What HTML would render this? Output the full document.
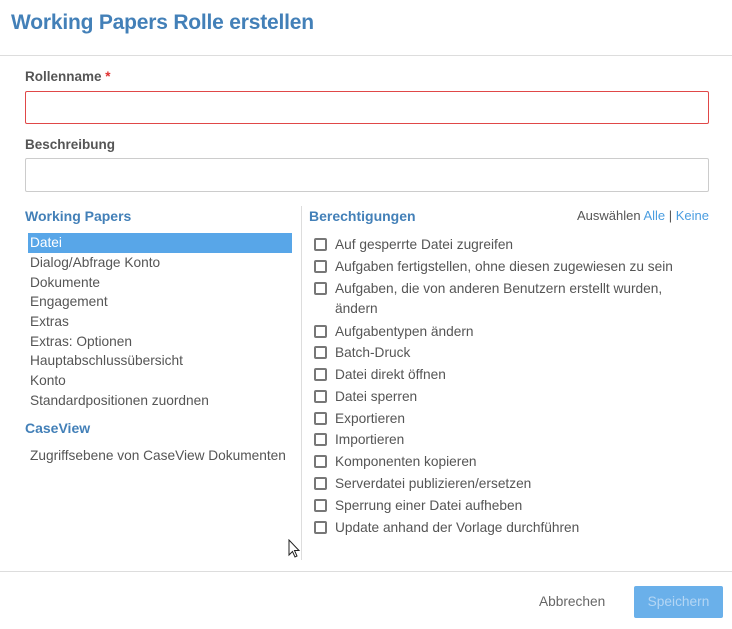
<!DOCTYPE html>
<html><head><meta charset="utf-8"><style>
*{margin:0;padding:0;box-sizing:border-box}
body{width:732px;height:629px;background:#fff;font-family:"Liberation Sans",sans-serif;color:#555;position:relative;overflow:hidden;font-size:13.7px}
.a{position:absolute;white-space:nowrap}
.t{left:11px;top:11px;font-size:21px;color:#4380b8;font-weight:bold;letter-spacing:-0.2px}
.hr{position:absolute;left:0;width:732px;height:1px;background:#ddd}
.lbl{font-weight:bold;font-size:13.5px;color:#555}
.in{position:absolute;left:25px;width:684px;border:1px solid #ccc;border-radius:2px}
.h{font-weight:bold;color:#4380b8;font-size:14px}
.li{position:absolute;left:28px;width:264px;height:20px;line-height:20px;padding-left:2px}
.cb{position:absolute;left:314px;width:13px;height:13px;border:2px solid #777;border-radius:2px}
.ct{position:absolute;left:335px}
</style></head><body>
<div class="a t">Working Papers Rolle erstellen</div>
<div class="hr" style="top:55px"></div>
<div class="a lbl" style="left:25px;top:69px">Rollenname <span style="color:#e03030">*</span></div>
<div class="in" style="top:91px;height:33px;border-color:#e04848"></div>
<div class="a lbl" style="left:25px;top:137px">Beschreibung</div>
<div class="in" style="top:158px;height:34px"></div>
<div class="a h" style="left:25px;top:208px">Working Papers</div>
<div style="position:absolute;left:301px;top:206px;width:1px;height:354px;background:#ddd"></div>
<div class="li" style="top:233px;background:#58a6e8;color:#fff">Datei</div>
<div class="li" style="top:253px">Dialog/Abfrage Konto</div>
<div class="li" style="top:273px">Dokumente</div>
<div class="li" style="top:292px">Engagement</div>
<div class="li" style="top:312px">Extras</div>
<div class="li" style="top:332px">Extras: Optionen</div>
<div class="li" style="top:351px">Hauptabschlussübersicht</div>
<div class="li" style="top:371px">Konto</div>
<div class="li" style="top:391px">Standardpositionen zuordnen</div>
<div class="a h" style="left:25px;top:420px">CaseView</div>
<div class="li" style="top:446px">Zugriffsebene von CaseView Dokumenten</div>
<div class="a h" style="left:309px;top:208px">Berechtigungen</div>
<div class="a" style="right:23px;top:208px;font-size:13px">Auswählen <span style="color:#4a9de0">Alle</span> | <span style="color:#4a9de0">Keine</span></div>
<div class="cb" style="top:238px"></div><div class="ct" style="top:237px">Auf gesperrte Datei zugreifen</div>
<div class="cb" style="top:260px"></div><div class="ct" style="top:259px">Aufgaben fertigstellen, ohne diesen zugewiesen zu sein</div>
<div class="cb" style="top:282px"></div><div class="ct" style="top:279px;line-height:20px;white-space:normal;width:360px">Aufgaben, die von anderen Benutzern erstellt wurden, ändern</div>
<div class="cb" style="top:325px"></div><div class="ct" style="top:324px">Aufgabentypen ändern</div>
<div class="cb" style="top:346px"></div><div class="ct" style="top:345px">Batch-Druck</div>
<div class="cb" style="top:368px"></div><div class="ct" style="top:367px">Datei direkt öffnen</div>
<div class="cb" style="top:390px"></div><div class="ct" style="top:389px">Datei sperren</div>
<div class="cb" style="top:412px"></div><div class="ct" style="top:411px">Exportieren</div>
<div class="cb" style="top:433px"></div><div class="ct" style="top:432px">Importieren</div>
<div class="cb" style="top:455px"></div><div class="ct" style="top:454px">Komponenten kopieren</div>
<div class="cb" style="top:477px"></div><div class="ct" style="top:476px">Serverdatei publizieren/ersetzen</div>
<div class="cb" style="top:499px"></div><div class="ct" style="top:498px">Sperrung einer Datei aufheben</div>
<div class="cb" style="top:521px"></div><div class="ct" style="top:520px">Update anhand der Vorlage durchführen</div>
<svg style="position:absolute;left:288px;top:539px" width="14" height="20" viewBox="0 0 14 20"><path d="M1 1 L1 16 L4.5 12.5 L7 18 L9 17 L6.5 11.5 L11 11.5 Z" fill="#fff" stroke="#222" stroke-width="1"/></svg>
<div class="hr" style="top:571px"></div>
<div class="a" style="left:539px;top:594px;color:#666">Abbrechen</div>
<div style="position:absolute;left:634px;top:586px;width:89px;height:32px;background:#6ab0ea;border-radius:2px;color:#b4d6f4;text-align:center;line-height:32px">Speichern</div>
</body></html>
